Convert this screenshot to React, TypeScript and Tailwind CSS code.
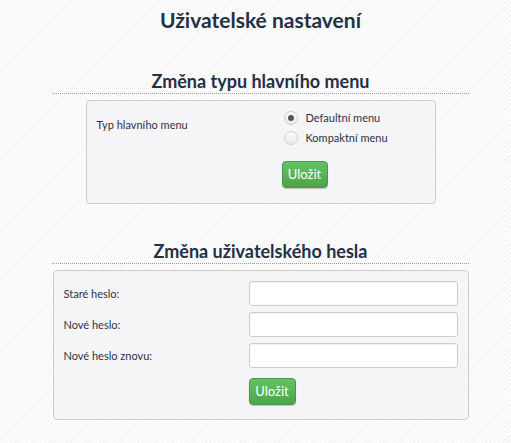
import React, { useState } from 'react';

const font = { fontFamily: 'Lato, "Open Sans", sans-serif' };

const SaveButton: React.FC<{ className?: string }> = ({ className = '' }) => (
  <button
    className={`h-[27px] w-[46px] rounded-[4px] border border-[#449a44] bg-[linear-gradient(#62c462,#4ea34e)] text-[13px] text-white shadow-[0_1px_1px_rgba(0,0,0,0.2)] ${className}`}
  >
    Uložit
  </button>
);

const Radio: React.FC<{ checked: boolean; label: string; onChange: () => void }> = ({ checked, label, onChange }) => (
  <label className="flex h-[20px] items-center gap-[8px] text-[11px] text-[#2c3344]" onClick={onChange}>
    <span className="flex h-[14px] w-[14px] items-center justify-center rounded-full border border-[#d0d0d0] bg-[linear-gradient(#fcfcfc,#e8e8e8)]">
      {checked && <span className="h-[6px] w-[6px] rounded-full bg-[#555]" />}
    </span>
    {label}
  </label>
);

const SectionTitle: React.FC<{ children: React.ReactNode }> = ({ children }) => (
  <div className="w-[417px] border-b border-dotted border-[#9a9a9a] pb-[1px] text-center text-[18px] font-bold leading-[22px] text-[#243044]">
    {children}
  </div>
);

const Field: React.FC<{ label: string }> = ({ label }) => (
  <div className="flex h-[25px] items-center">
    <span className="w-[185px] text-[11px] leading-[14px] text-[#2c3344]">{label}</span>
    <input
      type="password"
      className="h-[25px] w-[209px] rounded-[3px] border border-[#cccccc] bg-white shadow-[inset_0_1px_1px_rgba(0,0,0,0.06)] outline-none"
    />
  </div>
);

export default function App() {
  const [menu, setMenu] = useState<'default' | 'compact'>('default');

  return (
    <div
      style={font}
      className="flex min-h-[443px] w-full flex-col items-center bg-[repeating-linear-gradient(135deg,#fdfdfd_0px,#fdfdfd_2px,#f3f3f3_2px,#f3f3f3_3px)] pl-[10px] pt-[7px]"
    >
      <h1 className="text-[21px] font-bold leading-[26px] text-[#243044]">Uživatelské nastavení</h1>

      <div className="mt-[37px]">
        <SectionTitle>Změna typu hlavního menu</SectionTitle>
      </div>
      <div className="mt-[6px] flex h-[104px] w-[350px] rounded-[4px] border border-[#cccccc] bg-[#f5f5f7] pl-[10px] pt-[7px]">
        <div className="w-[187px] pt-[9px] text-[11px] text-[#2c3344]">Typ hlavního menu</div>
        <div className="flex flex-col">
          <Radio checked={menu === 'default'} label="Defaultní menu" onChange={() => setMenu('default')} />
          <Radio checked={menu === 'compact'} label="Kompaktní menu" onChange={() => setMenu('compact')} />
          <SaveButton className="-ml-[2px] mt-[13px]" />
        </div>
      </div>

      <div className="mt-[36px]">
        <SectionTitle>Změna uživatelského hesla</SectionTitle>
      </div>
      <div className="mt-[6px] flex w-[416px] flex-col gap-[6px] rounded-[4px] border border-[#cccccc] bg-[#f5f5f7] pb-[14px] pl-[10px] pt-[10px]">
        <Field label="Staré heslo:" />
        <Field label="Nové heslo:" />
        <Field label="Nové heslo znovu:" />
        <SaveButton className="ml-[185px] mt-[4px] w-[47px]" />
      </div>
    </div>
  );
}
